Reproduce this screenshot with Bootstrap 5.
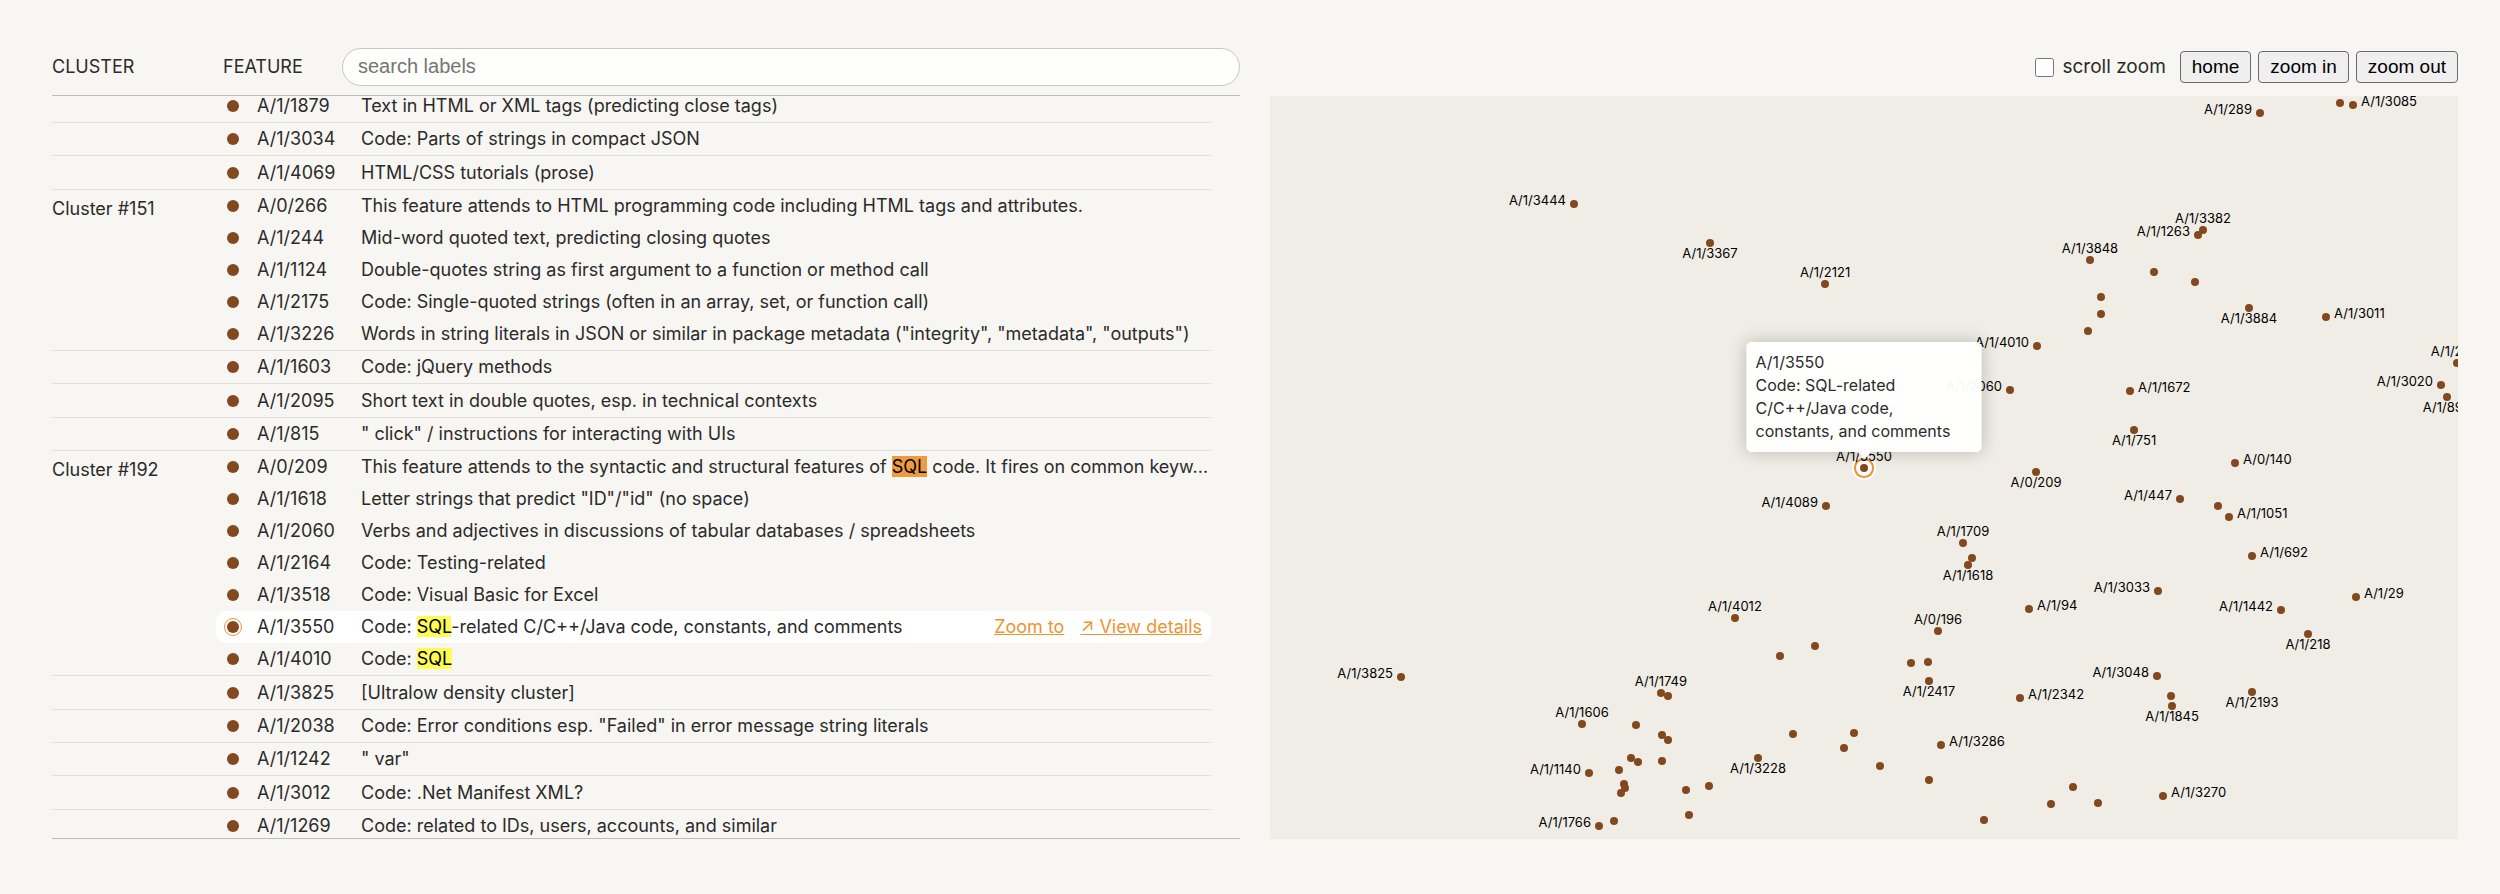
<!DOCTYPE html>
<html lang="en">
<head>
<meta charset="utf-8">
<meta name="viewport" content="width=device-width, initial-scale=1">
<title>Feature browser</title>
<link href="https://cdn.jsdelivr.net/npm/bootstrap@5.3.0/dist/css/bootstrap.min.css" rel="stylesheet">
<style>
  :root { --paper: #f7f6f2; --canvas: #efede5; --ink: #2b2b2b; --dot: #84481e; --accent: #ec9430; }
  body { background: var(--paper); color: var(--ink); font: 18px/32px Inter, "Noto Sans", sans-serif; }
  .page { padding: 34px 42px 55px 52px; column-gap: 30px; }
  .pane { flex: 1 1 0; min-width: 0; }
  .bar { height: 62px; }

  /* feature list */
  .list-bar { border-bottom: 1px solid #bdbcb8; }
  .col-cluster { width: 171px; flex: none; }
  .col-feature { width: 119px; flex: none; }
  .search { height: 38px; padding: 0 15px; border: 1px solid #c8c7c3; border-radius: 19px; background: #fefefc; font: 20px "Liberation Sans", Arial, sans-serif; }
  .search::placeholder { color: #757575; }
  .list-body { border-bottom: 1px solid #bdbcb8; padding-right: 29px; }
  .features { table-layout: fixed; margin-top: -6px; border-collapse: separate; border-spacing: 0; }
  .features td, .features th { padding: 0; height: 32px; font-weight: 400; }
  .features th { vertical-align: top; padding-top: 3px; line-height: 32px; }
  .features tbody tr:last-child > td, .features th { border-bottom: 1px solid #e0dfdb; }
  .features tbody:nth-of-type(3n) tr:last-child > td { height: 34px; }
  .features td.id { padding-left: 11px; }
  .c1 { width: 164px; } .c2 { width: 145px; }
  .features .picked td.txt { padding-right: 9px; }
  .bullet { width: 12px; height: 12px; border-radius: 50%; background: var(--dot); margin-right: 18px; flex: none; }
  .picked td { background: #fff; }
  .picked td.id { border-radius: 10px 0 0 10px; }
  .picked td.txt { border-radius: 0 10px 10px 0; }
  .picked .bullet { outline: 1px solid var(--accent); outline-offset: 2px; }
  .picked a { color: var(--accent); }
  .hit { background: #fffc54; color: #000; padding: 0; }
  .hit-alt { background: #f09a3e; }

  /* map */
  .switch { font-size: 19px; margin-right: 14px; }
  .tick { width: 19px; height: 19px; margin: 0 8px 0 0; border: 1px solid #767676; border-radius: 4px; }
  .tools { gap: 7px; }
  .tool { height: 32px; padding: 0 11px; border: 1px solid #6b6b6b; border-radius: 4px; background: #efefef; color: #000; font: 19px "Liberation Sans", Arial, sans-serif; }
  .map { background: var(--canvas); }
  .pin { position: absolute; width: 8px; height: 8px; margin: -4px 0 0 -4px; border-radius: 50%; background: var(--dot); }
  .pin span { position: absolute; color: #000; font-size: 13px; line-height: 16px; white-space: nowrap; }
  .at-r span { left: 12px; top: -8px; }
  .at-l span { right: 12px; top: -8px; }
  .at-t span { left: 50%; bottom: 8px; transform: translateX(-50%); }
  .at-b span { left: 50%; top: 6px; transform: translateX(-50%); }
  .chosen { box-shadow: 0 0 0 4px #fff, 0 0 0 6px var(--accent), 0 0 0 8px #fff; }
  .tip { position: absolute; width: 235px; padding: 9px; border-radius: 5px; background: rgba(255,255,255,.96); box-shadow: 0 0 18px rgba(0,0,0,.22); font-size: 16px; line-height: 23px; transform: translate(-50%, -100%); margin-top: -16px; }
  .tip::after { content: ""; position: absolute; top: 100%; left: 50%; margin-left: -7px; border: 7px solid transparent; border-top-color: #fff; border-bottom: 0; }
</style>
</head>
<body>
<main class="page d-flex vh-100">
  <section class="pane d-flex flex-column">
    <header class="bar list-bar d-flex align-items-center pt-1 flex-shrink-0">
      <span class="col-cluster">CLUSTER</span>
      <span class="col-feature">FEATURE</span>
      <input class="search flex-fill" type="search" placeholder="search labels" aria-label="search labels">
    </header>
    <div class="list-body flex-fill overflow-hidden" id="list">
      <table class="features w-100" id="features">
        <colgroup><col class="c1"><col class="c2"><col></colgroup>
      </table>
    </div>
  </section>

  <section class="pane d-flex flex-column">
    <header class="bar d-flex align-items-center justify-content-end pt-1 flex-shrink-0">
      <label class="switch d-flex align-items-center" for="scroll"><input class="tick appearance-auto" type="checkbox" id="scroll">scroll zoom</label>
      <div class="tools d-flex">
        <button class="tool" type="button">home</button>
        <button class="tool" type="button">zoom in</button>
        <button class="tool" type="button">zoom out</button>
      </div>
    </header>
    <div class="map flex-fill position-relative overflow-hidden" id="map"></div>
  </section>
</main>

<script>
  // Each group: [cluster name, [feature id, label], ...]
  const groups = [
    ['', ['A/1/1879', 'Text in HTML or XML tags (predicting close tags)']],
    ['', ['A/1/3034', 'Code: Parts of strings in compact JSON']],
    ['', ['A/1/4069', 'HTML/CSS tutorials (prose)']],
    ['Cluster #151',
      ['A/0/266', 'This feature attends to HTML programming code including HTML tags and attributes.'],
      ['A/1/244', 'Mid-word quoted text, predicting closing quotes'],
      ['A/1/1124', 'Double-quotes string as first argument to a function or method call'],
      ['A/1/2175', 'Code: Single-quoted strings (often in an array, set, or function call)'],
      ['A/1/3226', 'Words in string literals in JSON or similar in package metadata ("integrity", "metadata", "outputs")']],
    ['', ['A/1/1603', 'Code: jQuery methods']],
    ['', ['A/1/2095', 'Short text in double quotes, esp. in technical contexts']],
    ['', ['A/1/815', '" click" / instructions for interacting with UIs']],
    ['Cluster #192',
      ['A/0/209', 'This feature attends to the syntactic and structural features of <mark class="hit hit-alt">SQL</mark> code. It fires on common keyw...'],
      ['A/1/1618', 'Letter strings that predict "ID"/"id" (no space)'],
      ['A/1/2060', 'Verbs and adjectives in discussions of tabular databases / spreadsheets'],
      ['A/1/2164', 'Code: Testing-related'],
      ['A/1/3518', 'Code: Visual Basic for Excel'],
      ['A/1/3550', 'Code: <mark class="hit">SQL</mark>-related C/C++/Java code, constants, and comments', true],
      ['A/1/4010', 'Code: <mark class="hit">SQL</mark>']],
    ['', ['A/1/3825', '[Ultralow density cluster]']],
    ['', ['A/1/2038', 'Code: Error conditions esp. "Failed" in error message string literals']],
    ['', ['A/1/1242', '" var"']],
    ['', ['A/1/3012', 'Code: .Net Manifest XML?']],
    ['', ['A/1/1269', 'Code: related to IDs, users, accounts, and similar']]
  ];
  const links = '<span class="d-flex gap-3"><a href="#map">Zoom to</a><a href="#details">↗ View details</a></span>';
  document.getElementById('features').insertAdjacentHTML('beforeend', groups.map(([name, ...rows]) =>
    '<tbody>' + rows.map(([id, text, picked], i) =>
      `<tr class="${picked ? 'picked' : ''}">` +
      (i ? '' : `<th scope="rowgroup" rowspan="${rows.length}">${name}</th>`) +
      `<td class="id"><div class="d-flex align-items-center"><i class="bullet"></i>${id}</div></td>` +
      `<td class="txt"><div class="d-flex justify-content-between"><span class="text-truncate">${text}</span>${picked ? links : ''}</div></td></tr>`
    ).join('') + '</tbody>').join(''));

  // Points on a 1188 x 742 plane: [x, y, label, side of the label]
  const points = [
    [304,108,'A/1/3444','l'],[440,147,'A/1/3367','b'],[555,188,'A/1/2121','t'],[990,17,'A/1/289','l'],[1070,7],[1083,9,'A/1/3085','r'],
    [933,134,'A/1/3382','t'],[928,139,'A/1/1263','l'],[820,164,'A/1/3848','t'],[884,176],[925,186],[831,201],
    [979,212,'A/1/3884','b'],[1056,221,'A/1/3011','r'],[831,218],[818,235],[767,250,'A/1/4010','l'],[740,294,'A/1/2060','l'],
    [860,295,'A/1/1672','r'],[864,334,'A/1/751','b'],[965,366,'A/0/140','r'],[766,376,'A/0/209','b'],[910,402,'A/1/447','l'],
    [948,409],[959,420,'A/1/1051','r'],[982,459,'A/1/692','r'],[693,446,'A/1/1709','t'],[702,461],[698,468,'A/1/1618','b'],
    [1187,267,'A/1/2710','t'],[1171,289,'A/1/3020','l'],[1177,301,'A/1/890','b'],[594,372,'A/1/3550','t',true],[556,409,'A/1/4089','l'],
    [465,521,'A/1/4012','t'],[545,549],[510,559],[131,580,'A/1/3825','l'],[391,596,'A/1/1749','t'],[398,599],[312,627,'A/1/1606','t'],
    [366,628],[392,638],[398,643],[523,637],[584,636],[574,651],[488,661,'A/1/3228','b'],[361,661],[368,665],[392,664],
    [319,676,'A/1/1140','l'],[349,673],[354,687],[355,691],[351,696],[416,693],[439,689],[419,718],[329,729,'A/1/1766','l'],[344,724],
    [888,494,'A/1/3033','l'],[1086,500,'A/1/29','r'],[759,512,'A/1/94','r'],[1011,513,'A/1/1442','l'],[668,534,'A/0/196','t'],
    [1038,537,'A/1/218','b'],[641,566],[658,565],[659,584,'A/1/2417','b'],[750,601,'A/1/2342','r'],[887,579,'A/1/3048','l'],
    [901,599],[902,609,'A/1/1845','b'],[982,595,'A/1/2193','b'],[671,648,'A/1/3286','r'],[610,669],[659,683],[803,690],[781,707],
    [828,706],[893,699,'A/1/3270','r'],[714,723]
  ];
  const at = (x, y) => `left:${(x / 11.88).toFixed(2)}%;top:${(y / 7.42).toFixed(2)}%`;
  document.getElementById('map').innerHTML = points.map(([x, y, name, side, chosen]) =>
    `<div class="pin ${side ? 'at-' + side : ''} ${chosen ? 'chosen' : ''}" style="${at(x, y)}">${name ? `<span>${name}</span>` : ''}</div>`
  ).join('') + `<div class="tip" role="tooltip" style="${at(594, 372)}">A/1/3550<br>Code: SQL-related C/C++/Java code, constants, and comments</div>`;
</script>
<script src="https://cdn.jsdelivr.net/npm/bootstrap@5.3.0/dist/js/bootstrap.bundle.min.js"></script>
</body>
</html>
